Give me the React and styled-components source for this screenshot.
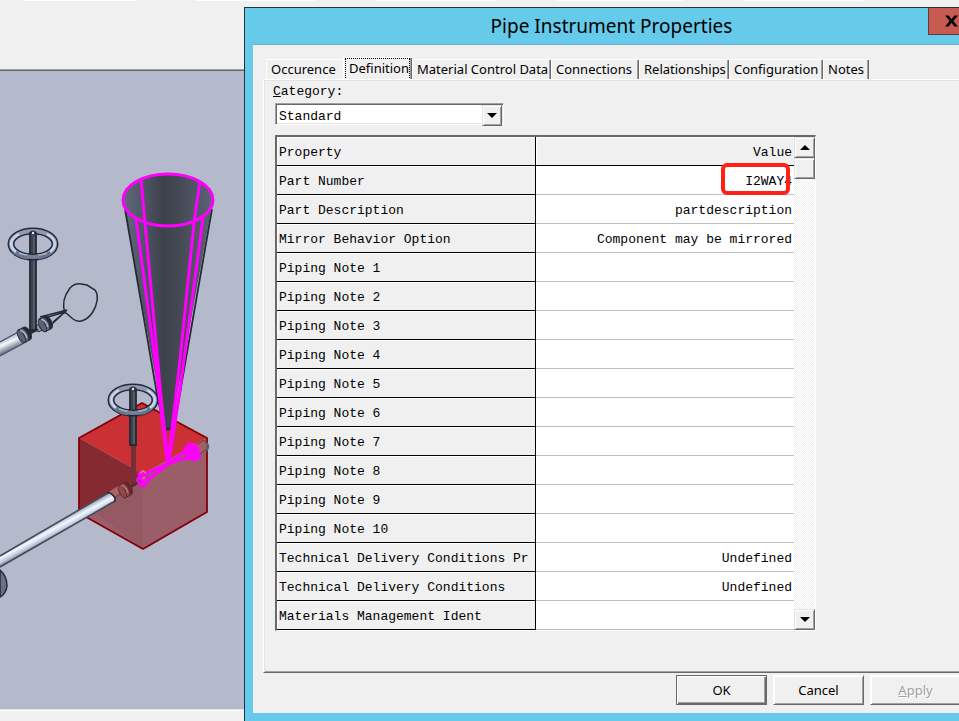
import React, { useState } from "react";
import styled, { createGlobalStyle, css } from "styled-components";

const GlobalStyle = createGlobalStyle`
  *, *::before, *::after { box-sizing: border-box; }
  html, body { margin: 0; height: 100%; overflow: hidden; }
  body { background: #f0f0f0; color: #000; }
  button, select { font: inherit; color: inherit; border-radius: 0; padding: 0; margin: 0; }
`;

const ui = css`
  font-family: "Noto Sans", "Open Sans", sans-serif;
  font-size: 13px;
  line-height: 18px;
`;
const mono = css`
  font-family: "Liberation Mono", "DejaVu Sans Mono", monospace;
  font-size: 13px;
  line-height: 18px;
`;
const raised = css`
  background: #f0f0f0;
  border: 1px solid;
  border-color: #e3e3e3 #696969 #696969 #e3e3e3;
  box-shadow: inset 1px 1px #fff, inset -1px -1px #a0a0a0;
`;

const Screen = styled.main`
  position: relative;
  display: flex;
  flex-direction: column;
  min-height: 100vh;
  overflow: hidden;
`;
const Toolbar = styled.header`
  height: 71px;
  border-bottom: 1px solid #696969;
  box-shadow: inset 0 -1px #a0a0a0;
`;
const ToolbarEdge = styled.div`
  display: flex;
  gap: 60px;
  height: 1px;
  padding-left: 25px;
`;
const ToolbarField = styled.div`
  width: ${(p) => p.$width}px;
  background: #fff;
`;
const Viewport = styled.section`
  flex: 1;
  background: #b4bacb;
  overflow: hidden;
`;
const Drawing = styled.svg`
  display: block;
  width: 244px;
  height: 638px;
`;
const StatusBar = styled.footer`
  height: 12px;
  border-top: 1px solid #e3e3e3;
  box-shadow: inset 0 1px #fff;
`;

const Dialog = styled.section`
  position: absolute;
  top: 7px;
  bottom: 0;
  left: 244px;
  right: -19px;
  display: flex;
  flex-direction: column;
  padding: 0 8px 8px;
  background: #66caea;
  border-top: 1px solid #24343b;
  border-left: 1px solid #24343b;
  ${ui}
`;
const TitleBar = styled.header`
  display: grid;
  grid-template-columns: 1fr auto 1fr;
  height: 37px;
`;
const Title = styled.h1`
  grid-column: 2;
  margin: 0;
  font-size: 19px;
  font-weight: 400;
  line-height: 37px;
  white-space: nowrap;
`;
const CloseButton = styled.button`
  justify-self: end;
  display: grid;
  place-items: center;
  width: 46px;
  height: 27px;
  margin-right: -4px;
  border: 1px solid #643a3b;
  border-top: 0;
  background: #c75b52;
`;
const DialogBody = styled.div`
  flex: 1;
  display: flex;
  flex-direction: column;
  padding: 12px 9px 8px 10px;
  background: #f0f0f0;
  box-shadow: 0 -1px #76a9c4;
`;
const TabList = styled.div`
  display: flex;
  align-items: flex-end;
  height: 22px;
  padding-left: 3px;
`;
const Tab = styled.button`
  display: flex;
  align-items: flex-start;
  flex: none;
  height: ${(p) => (p.$active ? 22 : 20)}px;
  width: ${(p) => p.$width}px;
  padding-left: 4px;
  overflow: hidden;
  border: solid #fff;
  border-width: 1px 0 0 1px;
  background: #f0f0f0;
  box-shadow: inset -1px 0 ${(p) => (p.$edge ? "#696969" : "#f0f0f0")},
    inset -2px 0 ${(p) => (p.$edge ? "#a0a0a0" : "#f0f0f0")};
  white-space: nowrap;
`;
const TabText = styled.span`
  display: block;
  height: 18px;
  ${(p) =>
    p.$active &&
    css`
      width: 65px;
      height: 20px;
      margin-left: -3px;
      padding-left: 3px;
      border: 1px dotted #000;
      border-bottom: 0;
    `}
`;
const Panel = styled.div`
  flex: 1;
  padding: 3px 9px 8px 11px;
  border: solid;
  border-width: 1px 2px 1px 1px;
  border-color: #fff #696969 #696969 #fff;
  box-shadow: inset 1px 1px #e3e3e3, inset 0 -1px #a0a0a0;
  ${mono}
`;
const CategoryLabel = styled.label`
  display: block;
  width: max-content;
  padding-bottom: 2px;
  margin-left: -2px;
`;
const SelectBox = styled.div`
  display: grid;
  grid-template-columns: 1fr 20px;
  width: 229px;
  height: 22px;
  border: 1px solid;
  border-color: #a0a0a0 #fff #fff #a0a0a0;
  box-shadow: inset 1px 1px #696969, inset -1px -1px #e3e3e3;
  padding: 1px;
  background: #fff;
`;
const Select = styled.select`
  grid-area: 1 / 1 / 2 / 3;
  appearance: none;
  border: 0;
  background: transparent;
  padding: 3px 0 0 2px;
`;
const Arrow = styled.span`
  grid-area: 1 / 2;
  display: grid;
  place-items: center;
  pointer-events: none;
  ${raised}
`;
const GridFrame = styled.div`
  display: grid;
  grid-template-columns: 1fr 21px;
  width: 541px;
  margin-top: 10px;
  border: solid;
  border-width: 2px 1px 1px 2px;
  border-color: #696969 #fff #fff #696969;
`;
const Table = styled.table`
  width: 100%;
  table-layout: fixed;
  border-collapse: separate;
  border-spacing: 0;
`;
const NameColumn = styled.col`
  width: 50%;
`;
const HeadCell = styled.th`
  height: 29px;
  padding: 5px 2px 1px;
  overflow: hidden;
  background: #f0f0f0;
  border-right: ${(p) => (p.$value ? 0 : 1)}px solid #000;
  border-bottom: 1px solid #000;
  box-shadow: inset 1px 1px #fff;
  font-weight: 400;
  text-align: ${(p) => (p.$value ? "right" : "left")};
  white-space: nowrap;
`;
const ValueCell = styled.td`
  position: relative;
  height: 29px;
  padding: 5px 2px 1px;
  background: #fff;
  border-bottom: 1px solid #c0c0c0;
  text-align: right;
  white-space: nowrap;
`;
const Highlight = styled.span`
  position: absolute;
  top: -3px;
  right: 4px;
  width: 69px;
  height: 32px;
  border: 4px solid #ff2016;
  border-radius: 6px;
`;
const ScrollBar = styled.div`
  display: flex;
  flex-direction: column;
  background: repeating-conic-gradient(#fff 0 25%, #f0f0f0 0 50%) 0 0 / 2px 2px;
`;
const ScrollButton = styled.button`
  display: grid;
  place-items: center;
  height: 21px;
  ${raised}
`;
const ScrollThumb = styled.div`
  height: 21px;
  margin-bottom: auto;
  ${raised}
`;
const Actions = styled.footer`
  display: flex;
  justify-content: flex-end;
  gap: 6px;
  padding-top: 2px;
`;
const ActionButton = styled.button`
  width: 91px;
  height: 30px;
  ${raised}
  border-color: #fff #696969 #696969 #fff;
  ${(p) =>
    p.$primary &&
    css`
      border-color: #696969;
      box-shadow: inset 1px 1px #fff, inset -1px -1px #696969, inset -2px -2px #a0a0a0;
    `}
  &:disabled {
    color: #a0a0a0;
    text-shadow: 1px 1px #fff;
  }
`;

const Triangle = ({ up }) => (
  <svg width="10" height="5" viewBox="0 0 10 5" aria-hidden="true">
    <path d={up ? "M0 5 5 0 10 5Z" : "M0 0H10L5 5Z"} />
  </svg>
);

const HandWheel = ({ x, y, stem }) => (
  <g transform={`translate(${x} ${y})`} fill="none">
    <ellipse rx="22" ry="13" stroke="#252a34" strokeWidth="7" />
    <ellipse rx="22" ry="13" stroke="#8e99b4" strokeWidth="4" />
    <path d="M-20 6A22 13 0 0 0 20 6" stroke="#69748d" strokeWidth="4" />
    <path d="M-17 8A22 13 0 0 1-14-10M17 8A22 13 0 0 0 14-10" stroke="#c9d7f7" strokeWidth="2.5" />
    <path d="M-14 9A22 12 0 0 0 14 9" stroke="#a4b0cc" strokeWidth="1.5" />
    <path d={`M-3-11V${stem}H3V-11Q0-14-3-11Z`} fill="#3d4450" stroke="#252a34" strokeWidth="1.8" />
    <path d={`M1-8V${stem - 1}`} stroke="#5a6272" strokeWidth="1.5" />
    <path d="M-5 12.7Q0 13.4 5 12.7" stroke="#252a34" strokeWidth="7" />
    <path d="M-6 12.6Q0 13.4 6 12.6" stroke="#75809a" strokeWidth="4" />
    <circle cy="-11" r="1.2" fill="#e4edff" />
  </g>
);

const Flange = ({ x, y, body, shade, light }) => (
  <g transform={`translate(${x} ${y}) rotate(-28)`} stroke={shade}>
    <ellipse cx="3" rx="4" ry="7" fill={shade} />
    <path d="M-3-7H2Q6 0 2 7H-3Z" fill={body} />
    <ellipse cx="-3" rx="3" ry="7" fill={body} />
    <path d="M-1-6Q3-1 1 4" fill="none" stroke={light} strokeWidth="1.6" />
  </g>
);

const Model = () => (
  <Drawing viewBox="0 71 244 638" role="img" aria-label="Pipe model">
    <defs>
      <linearGradient id="cone" x1="0" x2="1">
        <stop offset="0" stopColor="#626a7e" />
        <stop offset=".45" stopColor="#3d414b" />
        <stop offset=".6" stopColor="#424751" />
        <stop offset="1" stopColor="#5c6376" />
      </linearGradient>
      <linearGradient id="pipe" gradientUnits="userSpaceOnUse" x1="52" y1="524" x2="59" y2="537">
        <stop offset="0" stopColor="#9aa4bb" />
        <stop offset=".35" stopColor="#f2faff" />
        <stop offset=".65" stopColor="#bdc8de" />
        <stop offset="1" stopColor="#555d6e" />
      </linearGradient>
      <linearGradient id="pipeFar" gradientUnits="userSpaceOnUse" x1="8" y1="337" x2="14" y2="350">
        <stop offset="0" stopColor="#a8b2c8" />
        <stop offset=".35" stopColor="#f2faff" />
        <stop offset="1" stopColor="#555d6e" />
      </linearGradient>
    </defs>

    <path d="M0 342 21 331 26 342 0 356Z" fill="url(#pipeFar)" />
    <path d="M0 342 20 331M0 356 24 343" stroke="#4b5260" strokeWidth="1.3" />
    <path d="M30 333 38 329" stroke="#252a34" strokeWidth="3" />
    <path d="M36 326 42 322 45 329 38 332Z" fill="#8a95ac" stroke="#252a34" />
    <Flange x={24} y={335} body="#596276" shade="#252a34" light="#aab6d0" />
    <Flange x={45} y={324} body="#596276" shade="#252a34" light="#aab6d0" />
    <HandWheel x={33} y={244} stem={86} />
    <g fill="none" stroke="#252a34" strokeWidth="1.5">
      <path d="M40 317 67 310 51 325M48 317 65 312 53 322" />
      <path d="M65 313C62 305 64 296 70 288Q75 283 81 284L87 285 95 290Q98 294 97 301C96 308 91 317 84 320Q78 323 73 319L66 313Z" />
    </g>

    <path d="M79 438 142 403 207 438 143 474Z" fill="#cb3035" />
    <path d="M79 438 143 474V549L79 513Z" fill="#862a31" />
    <path d="M126 487 143 474 207 438V512L143 549 79 513Z" fill="#995e67" />
    <path d="M89 507 126 487 143 474V549Z" fill="#945963" />
    <path d="M79 438 142 403 207 438V512L143 549 79 513Z" fill="none" stroke="#820006" strokeWidth="1.8" />
    <path d="M195 446 204 440 209 447 199 455Z" fill="#a5605e" stroke="#74383b" />
    <path d="M206 443Q210 446 206 451" fill="none" stroke="#596070" strokeWidth="2.5" />
    <path d="M131 445H136V486H131Z" fill="#743035" />
    <path d="M108 492 120 484 126 490 114 498Z" fill="#aa6566" stroke="#762b31" />
    <path d="M130 487 142 480" stroke="#64272d" strokeWidth="3" />
    <Flange x={125} y={490} body="#91494e" shade="#64272d" light="#b47272" />
    <path d="M0 556 108 493Q113 493 115 501L0 567Z" fill="url(#pipe)" />
    <path d="M0 556 108 493M0 567 115 501" stroke="#454c59" strokeWidth="1.6" />
    <path d="M107 493Q111 492 115 498V502" fill="none" stroke="#252a34" strokeWidth="1.5" />
    <path d="M0 570Q7 576 7 586Q6 594 0 597Z" fill="#687187" stroke="#252a34" strokeWidth="1.5" />

    <path d="M123 200 165 428Q168 431 171 428L213 200Z" fill="url(#cone)" />
    <ellipse cx="168" cy="200" rx="45" ry="26" fill="url(#cone)" />
    <path d="M125 209 158 400 165 428Q168 431 171 428L176 416 212 209" fill="none" stroke="#252a34" strokeWidth="1.8" />
    <HandWheel x={133} y={400} stem={45} />
    <g fill="none" stroke="#f0f" strokeWidth="3">
      <ellipse cx="168" cy="200" rx="45" ry="26" />
      <path d="M141 180 145 223 160 386 168 463 180 360 194 223 200 181" />
      <path d="M136 219 156 368 167 462M203 218 180 390 169 462" />
      <path d="M168 464 147 473 139 474 144 486 148 480 168 464 189 448 199 458 181 459 168 464Z" />
      <circle cx="143" cy="480" r="5" />
      <path d="M185 449 189 444 196 445 199 453 195 460 187 457Z" fill="#f0f" />
    </g>
    <path d="m189 449 1 1m3 2 2-1m-4 4 1 1m3-6 1 1" stroke="#a34764" />
    <path d="M140 473 143 471 146 473M142 479 145 477" fill="none" stroke="#e68277" strokeWidth="1.5" />
  </Drawing>
);

const TABS = [
  ["Occurence", 77],
  ["Definition", 69],
  ["Material Control Data", 139],
  ["Connections", 88],
  ["Relationships", 90],
  ["Configuration", 94],
  ["Notes", 46],
];

const ROWS = [
  ["Part Number", "I2WAY4"],
  ["Part Description", "partdescription"],
  ["Mirror Behavior Option", "Component may be mirrored"],
  ...Array.from({ length: 10 }, (_, i) => [`Piping Note ${i + 1}`, ""]),
  ["Technical Delivery Conditions Pr", "Undefined"],
  ["Technical Delivery Conditions", "Undefined"],
  ["Materials Management Ident", ""],
];

export default function App() {
  const [active, setActive] = useState("Definition");
  return (
    <Screen>
      <GlobalStyle />
      <Toolbar>
        <ToolbarEdge>
          {[111, 119, 121, 127, 120].map((width, i) => (
            <ToolbarField key={i} $width={width} />
          ))}
        </ToolbarEdge>
      </Toolbar>
      <Viewport>
        <Model />
      </Viewport>
      <StatusBar />

      <Dialog role="dialog" aria-labelledby="dialog-title">
        <TitleBar>
          <Title id="dialog-title">Pipe Instrument Properties</Title>
          <CloseButton aria-label="Close">
            <svg width="13" height="12" viewBox="0 0 14 12" aria-hidden="true">
              <path d="M0 0H4L7 4 10 0H14L9 6 14 12H10L7 8 4 12H0L5 6Z" />
            </svg>
          </CloseButton>
        </TitleBar>
        <DialogBody>
          <TabList role="tablist">
            {TABS.map(([name, width]) => (
              <Tab
                key={name}
                role="tab"
                aria-selected={active === name}
                $active={active === name}
                $edge={name !== "Occurence"}
                $width={width}
                onClick={() => setActive(name)}
              >
                <TabText $active={active === name}>{name}</TabText>
              </Tab>
            ))}
          </TabList>
          <Panel role="tabpanel">
            <CategoryLabel htmlFor="category">
              <u>C</u>ategory:
            </CategoryLabel>
            <SelectBox>
              <Select id="category">
                <option>Standard</option>
              </Select>
              <Arrow>
                <Triangle />
              </Arrow>
            </SelectBox>
            <GridFrame>
              <Table>
                <colgroup>
                  <NameColumn />
                  <col />
                </colgroup>
                <thead>
                  <tr>
                    <HeadCell scope="col">Property</HeadCell>
                    <HeadCell scope="col" $value>
                      Value
                    </HeadCell>
                  </tr>
                </thead>
                <tbody>
                  {ROWS.map(([name, value]) => (
                    <tr key={name}>
                      <HeadCell scope="row">{name}</HeadCell>
                      <ValueCell>
                        {value}
                        {name === "Part Number" && <Highlight />}
                      </ValueCell>
                    </tr>
                  ))}
                </tbody>
              </Table>
              <ScrollBar>
                <ScrollButton aria-label="Scroll up">
                  <Triangle up />
                </ScrollButton>
                <ScrollThumb />
                <ScrollButton aria-label="Scroll down">
                  <Triangle />
                </ScrollButton>
              </ScrollBar>
            </GridFrame>
          </Panel>
          <Actions>
            <ActionButton $primary>OK</ActionButton>
            <ActionButton>Cancel</ActionButton>
            <ActionButton disabled>
              <u>A</u>pply
            </ActionButton>
          </Actions>
        </DialogBody>
      </Dialog>
    </Screen>
  );
}
